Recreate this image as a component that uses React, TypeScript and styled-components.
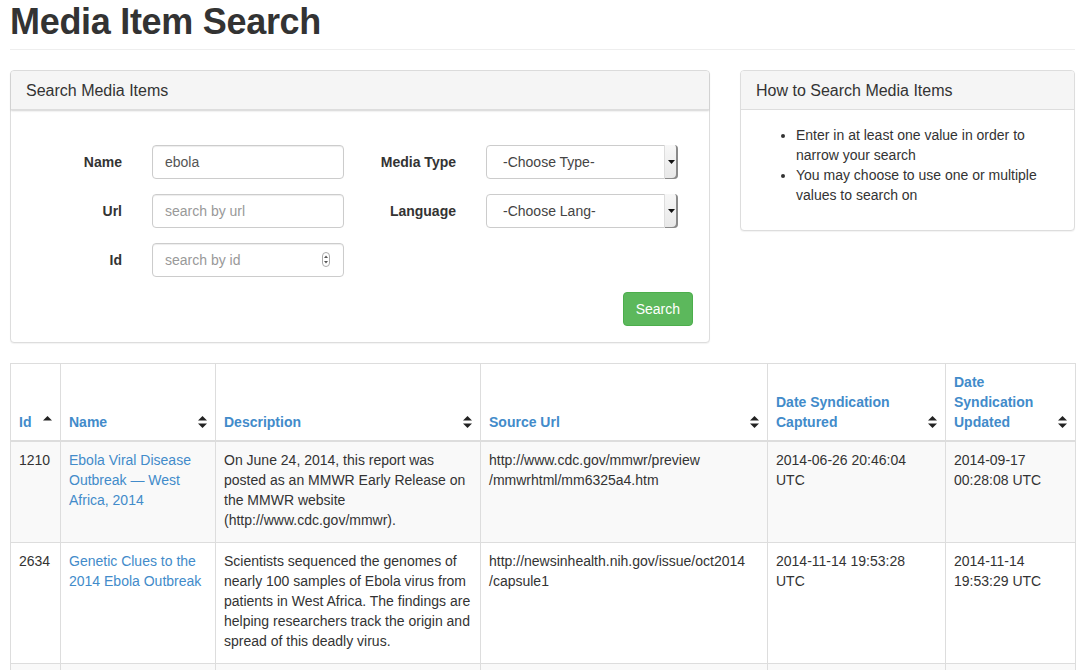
import React from 'react'
import styled, { createGlobalStyle } from 'styled-components'

const GlobalStyle = createGlobalStyle`
  html, body {
    margin: 0;
    padding: 0;
    overflow: hidden;
    background: #fff;
  }
  body {
    font-family: "Liberation Sans", Arial, Helvetica, sans-serif;
    font-size: 14px;
    line-height: 20px;
    color: #333;
  }
  * { box-sizing: border-box; }
`

const Page = styled.div`
  width: 1075px;
  padding-left: 10px;
`

const PageHeader = styled.div`
  padding-top: 2px;
  padding-bottom: 7px;
  margin-bottom: 20px;
  border-bottom: 1px solid #eee;
`

const Title = styled.h1`
  margin: 0;
  font-size: 36px;
  line-height: 1.1;
  font-weight: bold;
  letter-spacing: -0.3px;
  color: #333;
`

const PanelRow = styled.div`
  display: flex;
  gap: 30px;
  align-items: flex-start;
`

const Panel = styled.div<{ $width: number }>`
  width: ${p => p.$width}px;
  background: #fff;
  border: 1px solid #ddd;
  border-radius: 4px;
  box-shadow: 0 1px 1px rgba(0, 0, 0, 0.05);
`

const PanelHeading = styled.div<{ $raised?: boolean }>`
  padding: 11px 15px 10px;
  background: #f5f5f5;
  border-bottom: 1px solid #ddd;
  border-radius: 3px 3px 0 0;
  box-shadow: ${p => (p.$raised ? '0 1px 2px rgba(0,0,0,0.18)' : 'none')};
`

const PanelTitle = styled.h3`
  margin: 0;
  font-size: 16px;
  line-height: 1.1;
  font-weight: normal;
  color: #333;
`

const PanelBody = styled.div<{ $top?: number; $bottom?: number }>`
  padding: ${p => p.$top ?? 15}px 15px ${p => p.$bottom ?? 15}px;
`

const FormGrid = styled.div`
  display: grid;
  grid-template-columns: 334px 334px;
  row-gap: 15px;
`

const Field = styled.div`
  display: flex;
  align-items: flex-start;
`

const Label = styled.label`
  width: 96px;
  margin-right: 30px;
  padding-top: 7px;
  text-align: right;
  font-weight: bold;
`

const Control = styled.div`
  position: relative;
  width: 192px;
  height: 34px;
`

const TextInput = styled.input`
  display: block;
  width: 100%;
  height: 34px;
  padding: 6px 12px;
  font-family: inherit;
  font-size: 14px;
  color: #555;
  background: #fff;
  border: 1px solid #ccc;
  border-radius: 4px;
  box-shadow: inset 0 1px 1px rgba(0, 0, 0, 0.075);
  outline: none;

  &::placeholder {
    color: #999;
  }
`

const Spinner = styled.svg`
  position: absolute;
  right: 14px;
  top: 9px;
`

const Select = styled.select`
  display: block;
  width: 100%;
  height: 34px;
  padding: 6px 16px;
  font-family: inherit;
  font-size: 14px;
  color: #444;
  background: #fff;
  border: 1px solid #ccc;
  border-radius: 4px;
  appearance: none;
  outline: none;
`

const SelectButton = styled.span`
  position: absolute;
  top: 0;
  right: 0;
  bottom: 0;
  width: 14px;
  display: flex;
  align-items: center;
  justify-content: center;
  background: linear-gradient(#f7f7f7, #e8e8e8);
  border-left: 1px solid #ddd;
  border-radius: 0 4px 4px 0;
  box-shadow: inset -2px -1px 0 #8a8a8a;
  pointer-events: none;
`

const Actions = styled.div`
  display: flex;
  justify-content: flex-end;
  margin-top: 15px;
  padding-right: 1px;
`

const Button = styled.button`
  height: 34px;
  padding: 6px 12px;
  font-family: inherit;
  font-size: 14px;
  line-height: 20px;
  color: #fff;
  background: #5cb85c;
  border: 1px solid #4cae4c;
  border-radius: 4px;
  cursor: pointer;
`

const HelpList = styled.ul`
  margin: 0 0 10px;
  padding-left: 40px;
`

const Table = styled.table`
  width: 1065px;
  margin-top: 20px;
  border-collapse: collapse;
  table-layout: fixed;
  border: 1px solid #ddd;
`

const Th = styled.th`
  padding: 8px;
  text-align: left;
  vertical-align: bottom;
  border: 1px solid #ddd;
  border-bottom-width: 2px;
  font-weight: bold;
  color: #428bca;
`

const HeadInner = styled.div`
  display: flex;
  align-items: flex-end;
  justify-content: space-between;
  gap: 6px;
`

const SortIcon = styled.svg`
  flex: none;
  margin-bottom: 4px;
`

const Row = styled.tr<{ $striped?: boolean }>`
  background: ${p => (p.$striped ? '#f9f9f9' : '#fff')};
`

const Td = styled.td`
  padding: 8px 8px 12px;
  vertical-align: top;
  border: 1px solid #ddd;
`

const Link = styled.a`
  color: #428bca;
  text-decoration: none;
`

const Caret = () => (
  <svg width="7" height="4" viewBox="0 0 7 4">
    <polygon points="0,0 7,0 3.5,4" fill="#111" />
  </svg>
)

const Sort: React.FC<{ up?: boolean }> = ({ up }) => (
  <SortIcon width="9" height="12" viewBox="0 0 9 12">
    <polygon points="4.5,0 9,4.5 0,4.5" fill="#222" />
    {!up && <polygon points="0,7.5 9,7.5 4.5,12" fill="#222" />}
  </SortIcon>
)

const columns = [
  { w: 50, label: 'Id', up: true },
  { w: 155, label: 'Name' },
  { w: 265, label: 'Description' },
  { w: 287, label: 'Source Url' },
  { w: 178, label: 'Date Syndication Captured' },
  { w: 130, label: 'Date Syndication Updated' },
]

const rows = [
  {
    id: 1210,
    name: 'Ebola Viral Disease Outbreak — West Africa, 2014',
    description: 'On June 24, 2014, this report was posted as an MMWR Early Release on the MMWR website (http://www.cdc.gov/mmwr).',
    url: ['http://www.cdc.gov/mmwr/preview', '/mmwrhtml/mm6325a4.htm'],
    captured: '2014-06-26 20:46:04 UTC',
    updated: '2014-09-17 00:28:08 UTC',
  },
  {
    id: 2634,
    name: 'Genetic Clues to the 2014 Ebola Outbreak',
    description: 'Scientists sequenced the genomes of nearly 100 samples of Ebola virus from patients in West Africa. The findings are helping researchers track the origin and spread of this deadly virus.',
    url: ['http://newsinhealth.nih.gov/issue/oct2014', '/capsule1'],
    captured: '2014-11-14 19:53:28 UTC',
    updated: '2014-11-14 19:53:29 UTC',
  },
]

export default function App() {
  return (
    <Page>
      <GlobalStyle />
      <PageHeader>
        <Title>Media Item Search</Title>
      </PageHeader>

      <PanelRow>
        <Panel $width={700}>
          <PanelHeading $raised>
            <PanelTitle>Search Media Items</PanelTitle>
          </PanelHeading>
          <PanelBody $top={35} $bottom={16}>
            <FormGrid>
              <Field>
                <Label>Name</Label>
                <Control>
                  <TextInput defaultValue="ebola" />
                </Control>
              </Field>
              <Field>
                <Label>Media Type</Label>
                <Control>
                  <Select defaultValue="">
                    <option value="">-Choose Type-</option>
                  </Select>
                  <SelectButton><Caret /></SelectButton>
                </Control>
              </Field>
              <Field>
                <Label>Url</Label>
                <Control>
                  <TextInput placeholder="search by url" />
                </Control>
              </Field>
              <Field>
                <Label>Language</Label>
                <Control>
                  <Select defaultValue="">
                    <option value="">-Choose Lang-</option>
                  </Select>
                  <SelectButton><Caret /></SelectButton>
                </Control>
              </Field>
              <Field>
                <Label>Id</Label>
                <Control>
                  <TextInput placeholder="search by id" />
                  <Spinner width="8" height="15" viewBox="0 0 8 15">
                    <rect x="0.5" y="0.5" width="7" height="14" rx="3.5" fill="#fff" stroke="#aaa" />
                    <polygon points="4,3.5 6,6 2,6" fill="#555" />
                    <polygon points="2,9 6,9 4,11.5" fill="#555" />
                  </Spinner>
                </Control>
              </Field>
            </FormGrid>
            <Actions>
              <Button>Search</Button>
            </Actions>
          </PanelBody>
        </Panel>

        <Panel $width={335}>
          <PanelHeading>
            <PanelTitle>How to Search Media Items</PanelTitle>
          </PanelHeading>
          <PanelBody>
            <HelpList>
              <li>Enter in at least one value in order to narrow your search</li>
              <li>You may choose to use one or multiple values to search on</li>
            </HelpList>
          </PanelBody>
        </Panel>
      </PanelRow>

      <Table>
        <colgroup>
          {columns.map(c => (
            <col key={c.label} style={{ width: c.w }} />
          ))}
        </colgroup>
        <thead>
          <tr>
            {columns.map(c => (
              <Th key={c.label}>
                <HeadInner>
                  <span>{c.label}</span>
                  <Sort up={c.up} />
                </HeadInner>
              </Th>
            ))}
          </tr>
        </thead>
        <tbody>
          {rows.map((r, i) => (
            <Row key={r.id} $striped={i % 2 === 0}>
              <Td>{r.id}</Td>
              <Td><Link href="#">{r.name}</Link></Td>
              <Td>{r.description}</Td>
              <Td>{r.url[0]}<wbr />{r.url[1]}</Td>
              <Td>{r.captured}</Td>
              <Td>{r.updated}</Td>
            </Row>
          ))}
          <Row $striped>
            {columns.map(c => (
              <Td key={c.label}>&nbsp;</Td>
            ))}
          </Row>
        </tbody>
      </Table>
    </Page>
  )
}
